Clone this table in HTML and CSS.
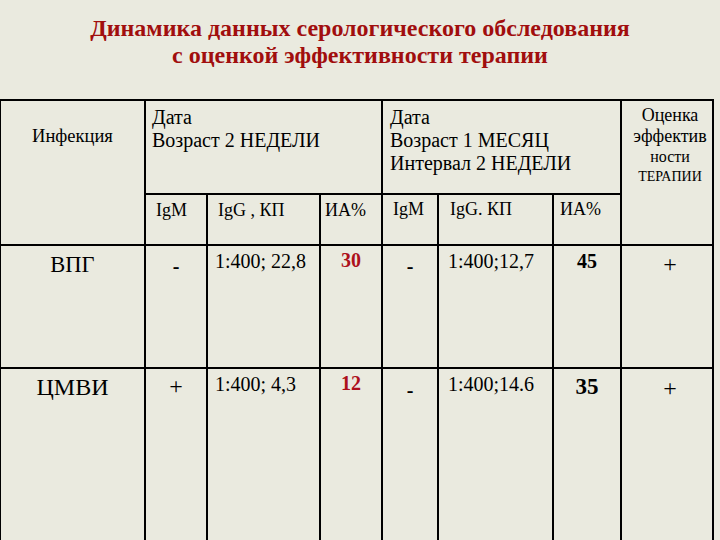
FILE: index.html
```html
<!DOCTYPE html>
<html lang="ru">
<head>
<meta charset="utf-8">
<title>Динамика данных серологического обследования</title>
<link rel="stylesheet" href="styles.css">
</head>
<body>
<div class="page">
  <h1 class="title">Динамика данных серологического обследования<br>с оценкой эффективности терапии</h1>
  <div class="table">
    <div class="cell c-inf">Инфекция</div>
    <div class="cell c-date1">Дата<br>Возраст 2 НЕДЕЛИ</div>
    <div class="cell c-date2">Дата<br>Возраст 1 МЕСЯЦ<br>Интервал 2 НЕДЕЛИ</div>
    <div class="cell c-eval">
      <span class="ev-l">Оценка</span>
      <span class="ev-l">эффектив</span>
      <span class="ev-m">ности</span>
      <span class="ev-s">ТЕРАПИИ</span>
    </div>

    <div class="cell sub sub-a">IgM</div>
    <div class="cell sub sub-a">IgG , КП</div>
    <div class="cell sub sub-a sub-ia1">ИА%</div>
    <div class="cell sub sub-b">IgM</div>
    <div class="cell sub sub-b sub-g2">IgG. КП</div>
    <div class="cell sub sub-b sub-ia2">ИА%</div>

    <div class="cell name name-small">ВПГ</div>
    <div class="cell sign dash">-</div>
    <div class="cell titer">1:400; 22,8</div>
    <div class="cell ia red">30</div>
    <div class="cell sign dash">-</div>
    <div class="cell titer titer2">1:400;12,7</div>
    <div class="cell ia">45</div>
    <div class="cell plus eval-plus">+</div>

    <div class="cell name last">ЦМВИ</div>
    <div class="cell plus last">+</div>
    <div class="cell titer last">1:400; 4,3</div>
    <div class="cell ia red last">12</div>
    <div class="cell sign dash dash-low last">-</div>
    <div class="cell titer titer2 last">1:400;14.6</div>
    <div class="cell ia big last">35</div>
    <div class="cell plus eval-plus plus-low last">+</div>
  </div>
</div>
</body>
</html>
```

FILE: styles.css
```css
html, body {
  margin: 0;
  padding: 0;
  background: #eaeadf;
}

body {
  font-family: "Liberation Serif", "Times New Roman", Tinos, "DejaVu Serif", "Noto Serif", serif;
  color: #000;
  width: 720px;
  height: 540px;
  overflow: hidden;
}

.page {
  width: 720px;
}

.title {
  margin: 0;
  padding-top: 15px;
  height: 99px;
  box-sizing: border-box;
  text-align: center;
  font-family: "Liberation Serif", "Times New Roman", Tinos, "DejaVu Serif", serif;
  font-size: 24px;
  line-height: 27px;
  font-weight: bold;
  color: #a10e0e;
}

.table {
  width: 714px;
  box-sizing: border-box;
  border-top: 2px solid #000;
  border-left: 1px solid #000;
  display: grid;
  grid-template-columns: 145px 62px 113px 62px 56px 115px 68px 92px;
  grid-template-rows: 94px 51px 123px 171px;
}

.cell {
  box-sizing: border-box;
  border-right: 2px solid #000;
  border-bottom: 2px solid #000;
  font-size: 20px;
  line-height: 23px;
  padding-top: 4px;
}

.cell.last {
  border-bottom: none;
}

.c-inf {
  grid-row: 1 / 3;
  grid-column: 1;
  text-align: center;
  font-size: 18.5px;
  line-height: 21px;
  padding-top: 25px;
}

.c-date1 {
  grid-column: 2 / 5;
  padding-left: 6px;
  padding-top: 5px;
}

.c-date2 {
  grid-column: 5 / 8;
  padding-left: 7px;
  padding-top: 5px;
}

.c-eval {
  grid-row: 1 / 3;
  grid-column: 8;
  text-align: center;
  padding-left: 6px;
  padding-top: 4px;
}

.ev-l, .ev-m, .ev-s {
  display: block;
}

.ev-l {
  font-size: 18px;
  line-height: 21px;
}

.ev-m {
  font-size: 16px;
  line-height: 20px;
}

.ev-s {
  font-size: 14px;
  line-height: 19px;
}

.sub {
  font-size: 18px;
  line-height: 21px;
  padding-left: 10px;
}

.sub-a {
  padding-top: 5px;
}

.sub-b {
  padding-top: 4px;
}

.sub-ia1 {
  padding-left: 4px;
}

.sub-g2 {
  padding-left: 11px;
}

.sub-ia2 {
  padding-left: 6px;
}

.name {
  text-align: center;
  font-size: 24px;
  line-height: 28px;
  padding-top: 4px;
}

.name-small {
  font-size: 22.5px;
  padding-top: 5px;
}

.sign {
  text-align: center;
}

.dash {
  font-weight: bold;
  padding-top: 9px;
}

.dash-low {
  padding-top: 10px;
}

.titer {
  padding-left: 7px;
}

.titer2 {
  padding-left: 9px;
}

.ia {
  text-align: center;
  font-weight: bold;
}

.red {
  color: #ad111c;
  padding-top: 3px;
}

.big {
  font-size: 23px;
  line-height: 28px;
  padding-top: 4px;
}

.plus {
  text-align: center;
  font-size: 24px;
  line-height: 28px;
  padding-top: 3px;
}

.eval-plus {
  padding-left: 6px;
  padding-top: 4px;
}

.plus-low {
  padding-top: 5px;
}
```
